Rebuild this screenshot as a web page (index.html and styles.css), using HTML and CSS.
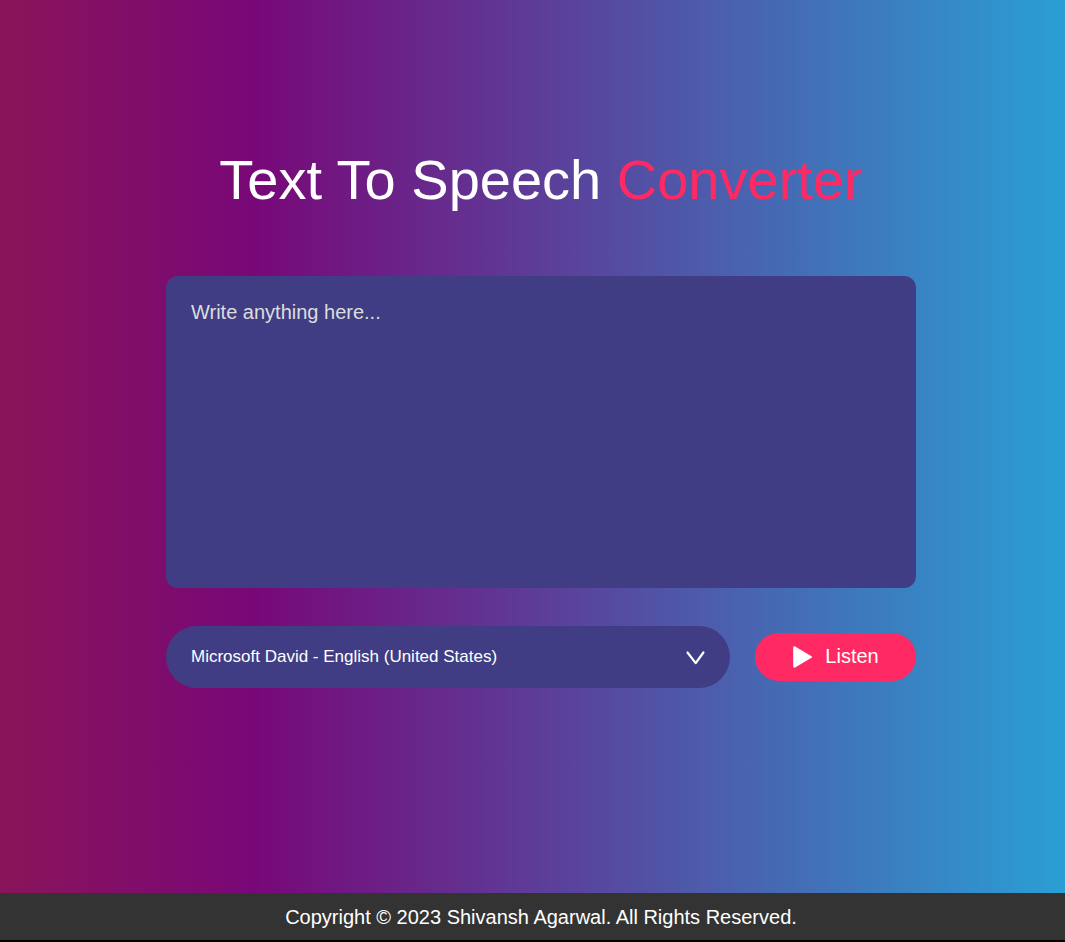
FILE: index.html
```html
<!DOCTYPE html>
<html lang="en">
<head>
<meta charset="utf-8">
<meta name="viewport" content="width=device-width, initial-scale=1">
<title>Text To Speech Converter</title>
<link rel="stylesheet" href="styles.css">
</head>
<body>
<main class="hero">
  <h1 class="title">Text To Speech <span class="accent">Converter</span></h1>
  <textarea class="message" aria-label="Text to read aloud" placeholder="Write anything here..."></textarea>
  <div class="row">
    <div class="voice">
      <select class="voice-select" aria-label="Voice">
        <option>Microsoft David - English (United States)</option>
      </select>
      <svg class="chevron" width="20" height="16" viewBox="0 0 20 16" aria-hidden="true"><path d="M2.5 2.5 10.7 13.2 18.4 2.5" fill="none" stroke="#fff" stroke-width="2.2" stroke-linecap="round" stroke-linejoin="round"/></svg>
    </div>
    <button class="listen" type="button">
      <svg width="20" height="24" viewBox="0 0 20 24" aria-hidden="true"><path d="M2.2 2.2V21.8L19 12Z" fill="#fff" stroke="#fff" stroke-width="2" stroke-linejoin="round"/></svg>
      <span>Listen</span>
    </button>
  </div>
</main>
<footer class="footer">Copyright © 2023 Shivansh Agarwal. All Rights Reserved.</footer>
</body>
</html>
```
FILE: styles.css
```css
* {
  box-sizing: border-box;
  margin: 0;
  padding: 0;
  font-family: "Liberation Sans", Arial, sans-serif;
}

body {
  min-height: 100vh;
  display: flex;
  flex-direction: column;
  background: linear-gradient(90deg, #8a1459 0%, #780878 24%, #2a9fd4 100%);
  color: #fff;
}

.hero {
  flex: 1;
  display: flex;
  flex-direction: column;
  align-items: center;
  justify-content: center;
  padding: 0 0 58px 17px;
}

.title {
  font-size: 56px;
  line-height: 64px;
  font-weight: 500;
  margin-bottom: 64px;
}

.accent {
  color: #ff2963;
}

.message,
.row {
  width: 72%;
  min-width: 300px;
  max-width: 750px;
}

.message {
  height: 312px;
  padding: 24px 25px;
  margin-bottom: 38px;
  border: 0;
  outline: 0;
  border-radius: 12px;
  resize: none;
  background: #403d84;
  color: #fff;
  font-size: 20px;
  line-height: 24px;
}

.message::placeholder {
  color: #ddd;
}

.row {
  display: flex;
  align-items: center;
  gap: 25px;
}

.voice {
  flex: 1;
  position: relative;
}

.voice-select {
  appearance: none;
  display: block;
  width: 100%;
  height: 62px;
  padding: 0 56px 0 25px;
  border: 0;
  border-radius: 31px;
  background: #403d84;
  color: #fff;
  font-size: 17px;
}

.chevron {
  position: absolute;
  right: 25px;
  top: 24px;
  pointer-events: none;
}

.listen {
  display: flex;
  align-items: center;
  justify-content: center;
  gap: 13px;
  width: 161px;
  height: 48px;
  border: 0;
  border-radius: 24px;
  background: #ff2963;
  color: #fff;
  font-size: 20px;
}

.footer {
  padding: 12px 0 11px 17px;
  border-bottom: 2px solid #000;
  background: #333;
  text-align: center;
  font-size: 20px;
  line-height: 24px;
}
```
